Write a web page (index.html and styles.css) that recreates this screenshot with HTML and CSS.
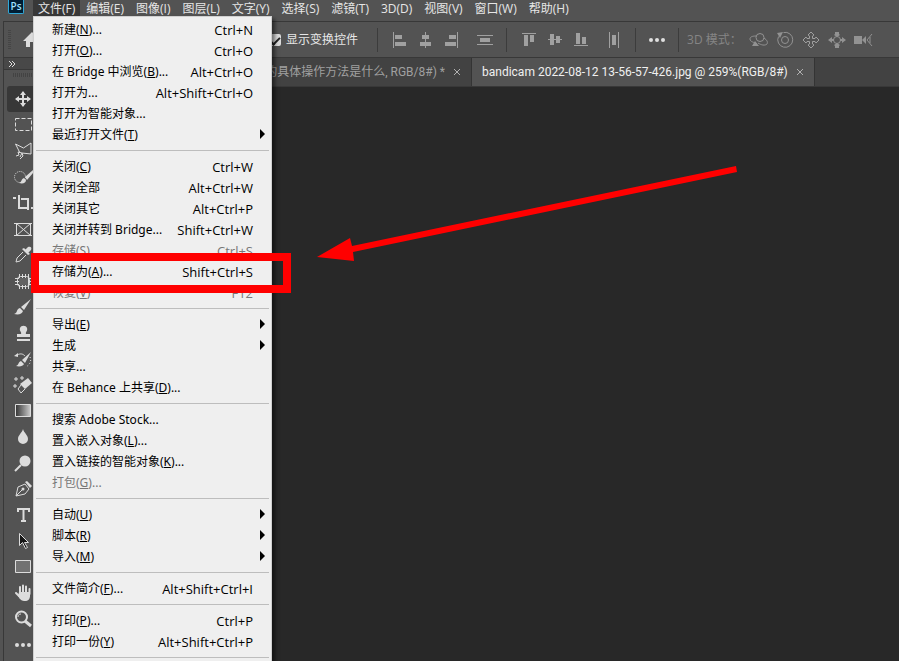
FILE: index.html
```html
<!DOCTYPE html>
<html lang="zh-CN">
<head>
<meta charset="utf-8">
<title>Photoshop</title>
<link rel="stylesheet" href="styles.css">
</head>
<body>
<nav class="menubar" aria-label="主菜单">
  <span class="logo">Ps</span>
  <button class="menubar-item open">文件(F)</button>
  <button class="menubar-item">编辑(E)</button>
  <button class="menubar-item">图像(I)</button>
  <button class="menubar-item">图层(L)</button>
  <button class="menubar-item">文字(Y)</button>
  <button class="menubar-item">选择(S)</button>
  <button class="menubar-item">滤镜(T)</button>
  <button class="menubar-item">3D(D)</button>
  <button class="menubar-item">视图(V)</button>
  <button class="menubar-item">窗口(W)</button>
  <button class="menubar-item">帮助(H)</button>
</nav>

<div class="frame">
  <div class="options">
    <span class="grip-v"></span>
    <button class="home" aria-label="主页"><svg width="18" height="16" viewBox="0 0 18 16"><path d="M9 0L0 9h3v6h4v-5h4v5h4V9h3z" fill="#dcdcdc"/></svg></button>
    <label class="check"><input type="checkbox" checked><span>显示变换控件</span></label>
    <span class="rule"></span>
    <div class="aligns">
      <button aria-label="左对齐"><svg width="18" height="18" viewBox="0 0 18 18"><path d="M2 1h1v16H2zM4 4h7v4H4zM4 11h11v4H4z"/></svg></button>
      <button aria-label="水平居中对齐"><svg width="18" height="18" viewBox="0 0 18 18"><path d="M8 1h1v16H8zM5 4h7v4H5zM3 11h11v4H3z"/></svg></button>
      <button aria-label="右对齐"><svg width="18" height="18" viewBox="0 0 18 18"><path d="M14 1h1v16h-1zM6 4h7v4H6zM2 11h11v4H2z"/></svg></button>
    </div>
    <button class="spread" aria-label="垂直分布"><svg width="18" height="18" viewBox="0 0 18 18"><path d="M1 4h16v1H1zM4 7h10v4H4zM1 13h16v1H1z"/></svg></button>
    <span class="rule"></span>
    <div class="aligns">
      <button aria-label="顶对齐"><svg width="18" height="18" viewBox="0 0 18 18"><path d="M2 2h14v1H2zM4 4h4v11H4zM10 4h4v7h-4z"/></svg></button>
      <button aria-label="垂直居中对齐"><svg width="18" height="18" viewBox="0 0 18 18"><path d="M2 8h14v1H2zM4 3h4v11H4zM10 5h4v7h-4z"/></svg></button>
      <button aria-label="底对齐"><svg width="18" height="18" viewBox="0 0 18 18"><path d="M2 14h14v1H2zM4 2h4v11H4zM10 6h4v7h-4z"/></svg></button>
    </div>
    <button class="spread" aria-label="水平分布"><svg width="18" height="18" viewBox="0 0 18 18"><path d="M4 1h1v16H4zM7 4h4v10H7zM13 1h1v16h-1z"/></svg></button>
    <span class="rule"></span>
    <button class="more" aria-label="更多"><svg width="18" height="6" viewBox="0 0 18 6"><circle cx="3" cy="3" r="2"/><circle cx="9" cy="3" r="2"/><circle cx="15" cy="3" r="2"/></svg></button>
    <span class="rule"></span>
    <span class="mode">3D 模式：</span>
    <div class="modes">
      <button aria-label="旋转"><svg width="20" height="18" viewBox="0 0 20 18"><g fill="none" stroke="#929292"><circle cx="11" cy="6.500" r="4"/><path d="M7 5C3 5 1 6 1 8c0 3 4 3 7 5M15 7c3 2 4 4 3 6-2 2-6 1-9-1"/></g><path d="M3 15l3-5 4 5z" fill="#929292"/></svg></button>
      <button aria-label="滚动"><svg width="20" height="18" viewBox="0 0 20 18"><g fill="none" stroke="#929292"><circle cx="10" cy="9" r="3.500"/><path d="M3.500 5.500a7.500 7.500 0 1 0 5-4"/></g><path d="M2 2l6-1-3 6z" fill="#929292"/></svg></button>
      <button aria-label="平移"><svg width="20" height="18" viewBox="0 0 20 18"><path d="M10 1l3 3-1.500 1v2.500H14L15 6l3 3-3 3-1-1.500h-2.500V13l1.500 1-3 3-3-3 1.500-1v-2.500H6L5 12 2 9l3-3 1 1.500h2.500V5L7 4z" fill="none" stroke="#a0a0a0"/></svg></button>
      <button aria-label="滑动"><svg width="20" height="18" viewBox="0 0 20 18"><circle cx="10" cy="9" r="3.500" fill="none" stroke="#929292"/><path d="M8 1h4v2l1 1-3 2-3-2 1-1zM8 17h4v-2l1-1-3-2-3 2 1 1zM1 9l4-3v2h2v2H5v2zM19 9l-4-3v2h-2v2h2v2z" fill="#929292"/></svg></button>
      <button aria-label="缩放"><svg width="20" height="18" viewBox="0 0 20 18"><path d="M1 5h8v8H1zM9 9l4-4v8z" fill="#929292"/><path d="M19 3l-5 6 5 6M17 6v6" fill="none" stroke="#929292"/></svg></button>
    </div>
  </div>

  <div class="work">
    <aside class="toolbox">
      <button class="expand" aria-label="展开"><svg width="8" height="6" viewBox="0 0 8 6"><path d="M1 0l3 3-3 3M4 0l3 3-3 3" fill="none" stroke="#dcdcdc"/></svg></button>
      <span class="grip-h"></span>
      <div class="tools">
        <button class="tool active" aria-label="移动"><svg viewBox="0 0 20 20"><path d="M10 3v14M3 10h14" class="l w"/><path d="M10 2l3 4H7zM10 18l3-4H7zM2 10l4-3v6zM18 10l-4-3v6z" class="f"/></svg></button>
        <button class="tool" aria-label="矩形选框"><svg viewBox="0 0 20 20"><path d="M2.500 3.500h16v12h-16z" class="l" stroke-dasharray="4 2"/></svg></button>
        <button class="tool" aria-label="多边形套索"><svg viewBox="0 0 20 20"><path d="M7 12L2.500 3l8 4 7.500-5v11l-9-1" class="l"/><path d="M7 16l2-4-4-1 1 3-3 1M9 12l1 3-3 3" class="l"/></svg></button>
        <button class="tool" aria-label="快速选择"><svg viewBox="0 0 20 20"><circle cx="7" cy="10" r="5.500" class="l" stroke-dasharray="1 1"/><path d="M20 3l-8 7 2 3 6-7zM11 11c-3 1-2 4-5 5 4 1 7 0 7-3z" class="f"/></svg></button>
        <button class="tool" aria-label="裁剪"><svg viewBox="0 0 20 20"><path d="M0 5h3M6 2v13h10M8 6h7v11M18 15h3" class="l w"/></svg></button>
        <button class="tool" aria-label="图框"><svg viewBox="0 0 20 20"><path d="M3.500 4.500h14v12h-14zM3.500 4.500l14 12M17.500 4.500l-14 12M1 4.500h18M1 16.500h18" class="l"/></svg></button>
        <button class="tool" aria-label="吸管"><svg viewBox="0 0 20 20"><path d="M11 3l6 6-2 1-6-6zM12 5l3-3c3-1 4 1 3 3l-3 3z" class="f"/><path d="M10 7l-6 6-1 4 4-1 6-6" class="l"/></svg></button>
        <button class="tool" aria-label="修补"><svg viewBox="0 0 20 20"><rect x="4.500" y="5.500" width="12" height="10" rx="3" class="l"/><path d="M6.500 3v15M9.500 3v15M12.500 3v15M15.500 3v15M2 7.500h17M2 10.500h17M2 13.500h17" class="l"/><rect x="6" y="7" width="9" height="7" fill="#626262"/></svg></button>
        <button class="tool" aria-label="画笔"><svg viewBox="0 0 20 20"><path d="M18 2L8 10l3 3zM7 11c-4 1-2 5-6 6 5 1 8 0 9-3z" class="f"/></svg></button>
        <button class="tool" aria-label="仿制图章"><svg viewBox="0 0 20 20"><path d="M8 11c1-2-2-3-1-6 1-3 6-3 7 0 1 3-2 4-1 6h4v3H4v-3zM4 16h13v2H4z" class="f"/></svg></button>
        <button class="tool" aria-label="历史记录画笔"><svg viewBox="0 0 20 20"><path d="M18 3L9 11l3 3zM8 12c-3 1-2 4-5 5 4 1 7 0 8-2zM1 7l4-3v4z" class="f"/><path d="M4 6c4-2 6-1 8 1" class="l"/><path d="M17 8c2 5-1 8-4 10" class="l" stroke-dasharray="1 2"/></svg></button>
        <button class="tool" aria-label="橡皮擦"><svg viewBox="0 0 20 20"><path d="M15 3l4 5-7 6-5-5z" class="f"/><path d="M8 10l-3 4 3 4 4-4M3 2v4M1 4h4M9 1v4M7 3h4M2 9v4M0 11h4" class="l"/></svg></button>
        <button class="tool" aria-label="渐变"><svg viewBox="0 0 20 20"><defs><linearGradient id="fade"><stop stop-color="#333"/><stop offset="1" stop-color="#ccc"/></linearGradient></defs><path d="M2.500 3.500h15v12h-15z" fill="url(#fade)" stroke="#dcdcdc"/></svg></button>
        <button class="tool" aria-label="模糊"><svg viewBox="0 0 20 20"><path d="M10 2c1 4 5 6 5 10a5 5 0 0 1-10 0c0-4 4-6 5-10z" class="f"/></svg></button>
        <button class="tool" aria-label="减淡"><svg viewBox="0 0 20 20"><circle cx="12" cy="8" r="5.500" class="f"/><path d="M8 12l-6 6" class="l w"/></svg></button>
        <button class="tool" aria-label="钢笔"><svg viewBox="0 0 20 20"><path d="M12 5l4 5-4 5-9 2 2-9zM3 17l6-6" class="l"/><circle cx="10" cy="10" r="1.500" class="f"/><path d="M12 3l2-1 5 5-2 2z" class="f"/></svg></button>
        <button class="tool" aria-label="文字"><svg viewBox="0 0 20 20"><path d="M5 7V4h11v3M10.500 4v12M8 16h5" class="l w"/></svg></button>
        <button class="tool" aria-label="路径选择"><svg viewBox="0 0 20 20"><path d="M6.500 2.500v12l3-3 3 6 2-1-3-5h4z" fill="#161616" stroke="#dcdcdc"/></svg></button>
        <button class="tool" aria-label="矩形"><svg viewBox="0 0 20 20"><path d="M2.500 3.500h15v12h-15z" fill="#727272" stroke="#dcdcdc"/></svg></button>
        <button class="tool" aria-label="抓手"><svg viewBox="0 0 20 20"><path d="M7 10V4M10 10V2.500M13 10V3.500M16.500 11V6M6 13l-3-3" fill="none" stroke="#dcdcdc" stroke-width="2" stroke-linecap="round"/><path d="M6 9h11v4c0 3-2 5-5 5s-5-1-7-5z" class="f"/></svg></button>
        <button class="tool" aria-label="缩放"><svg viewBox="0 0 20 20"><circle cx="8.500" cy="8" r="5.500" class="l w"/><path d="M12 12l6 5" stroke="#dcdcdc" stroke-width="3"/><path d="M5 8c0-2 1-3 3-3" class="l"/></svg></button>
        <button class="tool" aria-label="编辑工具栏"><svg viewBox="0 0 20 20"><circle cx="4" cy="10" r="2" class="f"/><circle cx="10" cy="10" r="2" class="f"/><circle cx="16" cy="10" r="2" class="f"/></svg></button>
      </div>
    </aside>
    <main class="documents">
      <div class="tabs">
        <div class="tab back"><span>的具体操作方法是什么, RGB/8#) *</span><button class="close" aria-label="关闭"><svg width="8" height="8" viewBox="0 0 8 8"><path d="M1 1l6 6M7 1L1 7"/></svg></button></div>
        <div class="tab front"><span>bandicam 2022-08-12 13-56-57-426.jpg @ 259%(RGB/8#)</span><button class="close" aria-label="关闭"><svg width="8" height="8" viewBox="0 0 8 8"><path d="M1 1l6 6M7 1L1 7"/></svg></button></div>
      </div>
      <div class="canvas"></div>
    </main>
  </div>
</div>

<div class="menu" role="menu">
  <button class="item">新建(<u>N</u>)...<kbd>Ctrl+N</kbd></button>
  <button class="item">打开(<u>O</u>)...<kbd>Ctrl+O</kbd></button>
  <button class="item">在 Bridge 中浏览(<u>B</u>)...<kbd>Alt+Ctrl+O</kbd></button>
  <button class="item">打开为...<kbd>Alt+Shift+Ctrl+O</kbd></button>
  <button class="item">打开为智能对象...</button>
  <button class="item sub">最近打开文件(<u>T</u>)</button>
  <hr>
  <button class="item">关闭(<u>C</u>)<kbd>Ctrl+W</kbd></button>
  <button class="item">关闭全部<kbd>Alt+Ctrl+W</kbd></button>
  <button class="item">关闭其它<kbd>Alt+Ctrl+P</kbd></button>
  <button class="item">关闭并转到 Bridge...<kbd>Shift+Ctrl+W</kbd></button>
  <button class="item" disabled>存储(<u>S</u>)<kbd>Ctrl+S</kbd></button>
  <button class="item">存储为(<u>A</u>)...<kbd>Shift+Ctrl+S</kbd></button>
  <button class="item" disabled>恢复(<u>V</u>)<kbd>F12</kbd></button>
  <hr>
  <button class="item sub">导出(<u>E</u>)</button>
  <button class="item sub">生成</button>
  <button class="item">共享...</button>
  <button class="item">在 Behance 上共享(<u>D</u>)...</button>
  <hr>
  <button class="item">搜索 Adobe Stock...</button>
  <button class="item">置入嵌入对象(<u>L</u>)...</button>
  <button class="item">置入链接的智能对象(<u>K</u>)...</button>
  <button class="item" disabled>打包(<u>G</u>)...</button>
  <hr>
  <button class="item sub">自动(<u>U</u>)</button>
  <button class="item sub">脚本(<u>R</u>)</button>
  <button class="item sub">导入(<u>M</u>)</button>
  <hr>
  <button class="item">文件简介(<u>F</u>)...<kbd>Alt+Shift+Ctrl+I</kbd></button>
  <hr>
  <button class="item">打印(<u>P</u>)...<kbd>Ctrl+P</kbd></button>
  <button class="item">打印一份(<u>Y</u>)<kbd>Alt+Shift+Ctrl+P</kbd></button>
  <hr>
</div>

<div class="highlight"></div>
<svg class="arrow" width="424" height="104" viewBox="0 0 424 104"><path d="M1 97l33-19 2 8L420 6l1 6L37 92l1 9z" fill="#f00"/></svg>
</body>
</html>
```
FILE: styles.css
```css
* { box-sizing: border-box; }
body {
  margin: 0;
  height: 100vh;
  overflow: hidden;
  display: flex;
  flex-direction: column;
  background: #535353;
  color: #e6e6e6;
  font: 12px/16px "Open Sans", "Noto Sans CJK SC", sans-serif;
}
button {
  margin: 0;
  padding: 0;
  border: 0;
  background: none;
  color: inherit;
  font: inherit;
}
svg { display: block; fill: #a0a0a0; }

.menubar { display: flex; height: 21px; padding-left: 8px; flex: none; }
.logo {
  width: 16px;
  height: 14px;
  margin-right: 9px;
  border: 1px solid #31a8d8;
  border-top: 0;
  border-radius: 0 0 2px 2px;
  background: #001d33;
  color: #9fe0ff;
  font-size: 10px;
  font-weight: 600;
  line-height: 13px;
  text-align: center;
}
.menubar-item { height: 16px; padding: 0 6px; white-space: nowrap; line-height: 15px; }
.menubar-item.open { padding: 0 5px; background: #383838; }

.frame {
  flex: 1;
  min-height: 0;
  margin-left: 3px;
  border-left: 1px solid #383838;
  border-top: 1px solid #383838;
  display: flex;
  flex-direction: column;
}
.options {
  display: flex;
  align-items: center;
  height: 36px;
  flex: none;
  border-bottom: 1px solid #383838;
}
.grip-v {
  width: 3px;
  height: 20px;
  margin: 0 12px 0 4px;
  background: repeating-linear-gradient(#454545 0 1px, transparent 1px 2px);
}
.check { display: flex; align-items: center; gap: 5px; margin-left: 228px; white-space: nowrap; }
.check input {
  appearance: none;
  width: 12px;
  height: 12px;
  margin: 0;
  border-radius: 2px;
  background: #dcdcdc;
  display: grid;
  place-items: center;
}
.check input::before {
  content: "";
  width: 8px;
  height: 4px;
  border: solid #222;
  border-width: 0 0 2px 2px;
  transform: rotate(-45deg);
}
.rule { width: 1px; height: 24px; background: #3c3c3c; flex: none; }
.check + .rule { margin-left: 19px; }
.aligns { display: flex; gap: 8px; margin-left: 13px; }
.spread { margin: 0 12px 0 15px; }
.more { margin: 0 12px; }
.more svg { fill: #e0e0e0; }
.mode { margin-left: 8px; color: #858585; white-space: nowrap; }
.modes { display: flex; gap: 6px; margin-left: 7px; }

.work { flex: 1; min-height: 0; display: flex; }
.toolbox { width: 40px; flex: none; display: flex; flex-direction: column; }
.expand { height: 12px; padding-left: 4px; background: #484848; border-bottom: 1px solid #383838; flex: none; }
.grip-h {
  width: 24px;
  height: 4px;
  margin: 3px 0 9px 9px;
  flex: none;
  background: repeating-linear-gradient(90deg, #434343 0 1px, transparent 1px 2px);
}
.tools { display: flex; flex-direction: column; }
.tool { height: 26px; padding-left: 6px; margin-left: 3px; border-radius: 3px; }
.tool.active { background: #383838; }
.tool svg { width: 20px; height: 20px; }
.f { fill: #dcdcdc; }
.l { fill: none; stroke: #dcdcdc; }
.w { stroke-width: 2px; }

.documents { flex: 1; min-width: 0; display: flex; flex-direction: column; }
.tabs {
  display: flex;
  height: 29px;
  flex: none;
  background: #424242;
  border-bottom: 1px solid #383838;
  font-family: Roboto, "Noto Sans CJK SC", sans-serif;
}
.tab { display: flex; align-items: center; gap: 8px; padding: 0 10px; border-right: 1px solid #343434; white-space: nowrap; }
.back { width: 428px; justify-content: flex-end; color: #a0a0a0; }
.front { background: #535353; color: #f0f0f0; }
.close svg { fill: none; stroke: #b0b0b0; }
.canvas { flex: 1; background: #282828; }

.menu {
  position: absolute;
  top: 16px;
  bottom: 0;
  left: 33px;
  width: 239px;
  overflow: hidden;
  padding: 2px 2px 0;
  border: solid #d0d0d0;
  border-width: 1px 1px 0;
  background: #efefef;
  color: #000;
  font-family: "Noto Sans", "Noto Sans CJK SC", sans-serif;
  box-shadow: 3px 3px 4px rgba(0, 0, 0, .5);
}
.item { display: flex; width: 100%; height: 21px; align-items: center; padding: 0 16px; white-space: pre; }
.item:disabled { color: #777; }
.item kbd { margin-left: auto; font: 13px/16px "Open Sans", sans-serif; }
.item u { text-underline-offset: 1px; }
.sub::after {
  content: "";
  margin: 0 -12px 2px auto;
  border: solid transparent;
  border-width: 5px 0 5px 5px;
  border-left-color: #000;
}
.menu hr { height: 1px; margin: 5px 0; border: 0; background: #bdbdbd; }
.highlight { position: absolute; left: 31px; top: 253px; width: 260px; height: 40px; border: 8px solid #f00; }
.arrow { position: absolute; left: 316px; top: 160px; }
```
